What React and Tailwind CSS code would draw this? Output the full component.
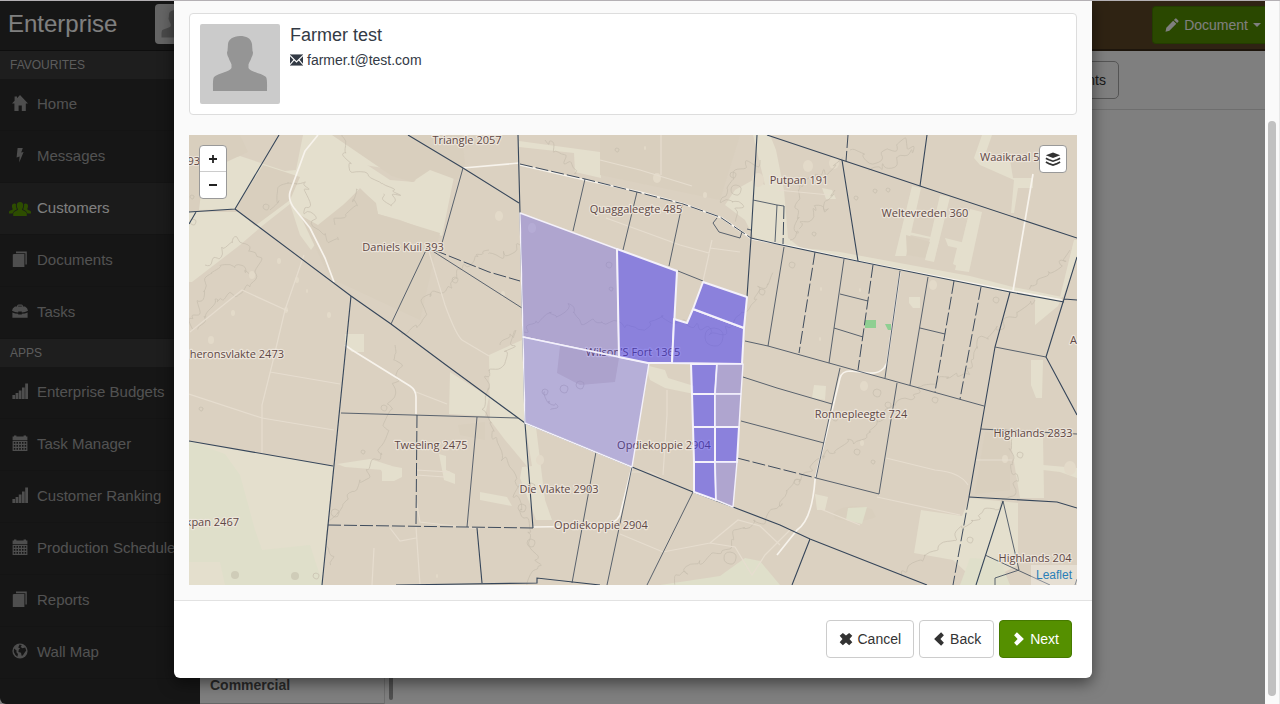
import React from "react";

/* ---------- icons ---------- */

const ICONS = {
  home: "M8 0 L16 8.5 H13.8 V16 H9.8 V10.5 H6.6 V16 H2.4 V8.5 H0 L2.6 5.7 V1.6 H5 V3.2 Z",
  flash: "M5.6 1 L10.8 1 L9.2 5.6 L11.6 5 L7.2 15.6 L7.6 9.4 L4.6 10.4 Z",
  copy: "M4 0.4 H14.8 V13.4 H13.4 V2.2 H4 Z M0.8 3.6 L2 3 H12.4 V16 H0.8 Z",
  signal:
    "M0.4 12 H3.1 V16 H0.4 Z M3.6 10 H6.3 V16 H3.6 Z M6.8 7.4 H9.5 V16 H6.8 Z M10 4.4 H12.7 V16 H10 Z M13.2 0.4 H16 V16 H13.2 Z",
  pencil: "M11.6 0.8 Q12.4 0 13.2 0.8 L15.2 2.8 Q16 3.6 15.2 4.4 L13.8 5.8 L10.2 2.2 Z M9.3 3.1 L12.9 6.7 L5 14.6 L0.6 15.6 L1.5 11 Z",
  remove: "M4.4 1 L8 4 L11.6 1 L15.2 4.4 L12 8 L15.2 11.6 L11.6 15 L8 12 L4.4 15 L0.8 11.6 L4 8 L0.8 4.4 Z",
  left: "M10.4 0.4 L13.6 3.8 L9.6 8 L13.6 12.2 L10.4 15.6 L2.4 8 Z",
  right: "M5.6 0.4 L2.4 3.8 L6.4 8 L2.4 12.2 L5.6 15.6 L13.6 8 Z",
};

function Icon({ name, className }) {
  if (name === "users")
    return (
      <svg viewBox="0 0 22 16" className={className} fill="currentColor" aria-hidden="true">
        <path d="M11 1 C13.2 1 14.4 2.4 14.2 5 C14.1 6.8 13.3 7.6 13 8.6 C13 9.6 17.4 10.2 17.8 12.6 V15 H4.2 V12.6 C4.6 10.2 9 9.6 9 8.6 C8.7 7.6 7.9 6.8 7.8 5 C7.6 2.4 8.8 1 11 1 Z" />
        <path d="M5.4 2.6 C6.2 2.6 6.7 2.9 7 3.3 C6.6 5.4 7.2 7 8 8.2 C7.4 9 4.4 9.6 3.5 12.6 H0 V10.8 C0.6 9.2 3.8 9 3.8 8 C2.6 6.4 2.4 2.6 5.4 2.6 Z" />
        <path d="M16.6 2.6 C15.8 2.6 15.3 2.9 15 3.3 C15.4 5.4 14.8 7 14 8.2 C14.6 9 17.6 9.6 18.5 12.6 H22 V10.8 C21.4 9.2 18.2 9 18.2 8 C19.4 6.4 19.6 2.6 16.6 2.6 Z" />
      </svg>
    );
  if (name === "briefcase")
    return (
      <svg viewBox="0 0 16 16" className={className} fill="currentColor" aria-hidden="true">
        <path fillRule="evenodd" d="M5 3.4 Q5 1.6 6.6 1.6 H9.4 Q11 1.6 11 3.4 H13 Q15.6 4.6 16 7.8 Q13 9.4 9.8 9.6 V8.6 H6.2 V9.6 Q3 9.4 0 7.8 Q0.4 4.6 3 3.4 Z M6.2 3.4 H9.8 V2.7 H6.2 Z" />
        <path d="M0.4 9.4 Q3 10.6 6.2 10.8 V11.6 H9.8 V10.8 Q13 10.6 15.6 9.4 V14.8 H0.4 Z" />
      </svg>
    );
  if (name === "calendar")
    return (
      <svg viewBox="0 0 16 16" className={className} aria-hidden="true">
        <path fill="currentColor" d="M2 1.4 V0.4 H4.4 V1.4 H11.6 V0.4 H14 V1.4 H15.4 V5 H0.6 V1.4 Z" />
        <path fill="none" stroke="currentColor" strokeWidth="1.2" d="M1.2 6.4 H14.8 V15.4 H1.2 Z M1.2 9.4 H14.8 M1.2 12.4 H14.8 M3.9 6.4 V15.4 M6.6 6.4 V15.4 M9.4 6.4 V15.4 M12.1 6.4 V15.4" />
      </svg>
    );
  if (name === "globe")
    return (
      <svg viewBox="0 0 16 16" className={className} aria-hidden="true">
        <circle cx="8" cy="8" r="7.6" fill="currentColor" />
        <path fill="#2d2d2d" d="M7.6 1.6 L9.8 2.2 L8.6 4 L10.6 5.2 L13.2 4.6 L14.2 7.6 L12.6 9.8 L10.8 12.6 L9.6 12.8 L9 9.8 L6.4 9 L6.8 6.4 L8.2 5.6 L6.2 4.6 Z M2 5.4 L4.6 7.6 L4.4 9.2 L6 11 L5.4 13.8 L3.4 12 L1.8 9 Z" />
      </svg>
    );
  if (name === "envelope")
    return (
      <svg viewBox="0 0 14 12" className={className} aria-hidden="true">
        <rect width="14" height="12" fill="currentColor" />
        <path d="M0 1 L7 8 L14 1 M0 11 L4.6 5.6 M14 11 L9.4 5.6" fill="none" stroke="#fff" strokeWidth="1.2" />
      </svg>
    );
  if (name === "layers")
    return (
      <svg viewBox="0 0 16 16" className={className} aria-hidden="true">
        <path d="M8 1.4 L15.2 4.2 L8 7 L0.8 4.2 Z" fill="#333" />
        <path d="M0.9 7.2 Q3 8.4 4 8.8 L8 10.2 L12 8.8 Q13 8.4 15.1 7.2 M0.9 11 Q3 12.2 4 12.6 L8 14 L12 12.6 Q13 12.2 15.1 11" fill="none" stroke="#333" strokeWidth="1.7" />
      </svg>
    );
  return (
    <svg viewBox="0 0 16 16" className={className} fill="currentColor" aria-hidden="true">
      <path d={ICONS[name]} />
    </svg>
  );
}

function Avatar({ className, label }) {
  return (
    <svg viewBox="0 0 80 80" className={className} role="img" aria-label={label}>
      <rect width="80" height="80" rx="2" fill="#cbcbcb" />
      <path
        fill="#959595"
        d="M40 12 C46 12 51 14 52 20 L52.5 27 C53.4 28 53 31 51.5 33.5 C50.5 37 49 38.5 48.5 40.5 V44 C50 48 62 49 66 53 C67.4 55 67 62 67 67 H13 C13 62 12.6 55 14 53 C18 49 30 48 31.5 44 V40.5 C31 38.5 29.5 37 28.5 33.5 C27 31 26.6 28 27.5 27 L28 20 C28.6 15 33 12.6 40 12 Z"
      />
    </svg>
  );
}

/* ---------- map data ---------- */

const PALE = [
  "M189 135 L205 135 L222 160 L240 156 L285 171 L296 170 L303 135 L320 135 L352 155 L390 180 L414 182 L432 162 L445 158 L456 167 L442 236 L400 220 L378 214 L375 203 L360 188 L345 204 L335 222 L318 240 L311 250 L300 235 L290 204 L262 226 L240 245 L192 282 L189 282 Z",
  "M315 135 L345 135 L395 160 L440 178 L420 182 L395 170 L335 160 Z",
  "M189 441 L333 466 L322 585 L189 585 Z",
  "M450 372 L489 397 L485 416 L449 414 Z",
  "M489 355 L522 340 L525 423 L530 470 L505 440 L490 420 Z",
  "M523 337 L649 363 L632 467 L525 423 Z",
  "M525 423 L536 427 L545 500 L552 520 L536 520 L520 478 L522 467 L532 466 Z",
  "M519 141 L600 152 L601 178 L575 172 L574 153 L519 147 Z",
  "M735 190 L753 180 L765 185 L753 135 L770 135 L776 150 L784 190 L788 238 L802 249 L755 240 L745 220 L725 205 Z",
  "M912 186 L921 188 L906 256 L895 256 Z",
  "M940 195 L950 197 L934 262 L925 260 Z",
  "M970 209 L982 212 L969 272 L955 270 Z",
  "M905 231 L935 238 L936 240 L905 234 Z",
  "M945 238 L965 243 L957 266 L953 264 L957 248 L948 246 Z",
  "M783 246 L840 252 L970 276 L1013 287 L1062 297 L1058 306 L1035 325 L1035 298 L860 262 Z",
  "M982 135 L992 135 L985 155 L1010 160 L1013 178 L1033 178 L1033 188 L1018 188 L1014 213 L1011 213 L1014 180 L980 165 L974 158 Z",
  "M909 297 L920 297 L920 308 L913 308 L909 303 Z",
  "M1074 240 L1077 240 L1077 258 L1063 297 L1060 297 Z",
  "M921 510 L962 516 L970 498 L1018 503 L1018 565 L980 585 L953 560 L914 553 Z",
  "M1010 438 L1043 435 L1044 498 L1020 498 Z",
  "M1031 360 L1043 360 L1042 398 L1036 398 L1031 385 Z",
  "M380 468 L386 465 L402 468 L402 477 L394 481 L382 481 L382 472 Z",
  "M439 454 L446 456 L446 470 L455 474 L455 484 L444 480 Z",
  "M337 464 L370 459 L392 466 L383 470 L345 467 Z",
  "M645 365 L665 370 L668 378 L694 386 L694 394 L665 388 L650 380 Z",
  "M345 334 L364 334 L364 352 L352 352 L345 345 Z",
  "M814 385 L826 386 L825 400 L812 398 Z",
  "M815 494 L828 497 L825 510 L817 510 Z",
  "M1043 465 L1077 468 L1077 478 L1060 472 L1043 470 Z",
  "M480 492 L507 497 L512 506 L480 500 Z",
  "M822 188 L832 190 L836 199 L826 199 Z",
];
const GREENISH = [
  "M189 441 L225 454 L240 475 L255 530 L262 550 L310 545 L323 585 L225 585 L220 562 L189 562 Z",
  "M720 576 L745 558 L760 561 L780 585 L660 585 Z",
  "M970 558 L1000 560 L1010 585 L960 585 Z",
  "M848 508 L867 507 L862 524 L846 520 Z",
];
const SHADE = [
  "M189 135 L240 135 L248 152 L220 165 L205 160 L199 210 L235 209 L263 165 L285 172 L300 177 L290 200 L255 226 L240 212 L189 212 Z",
  "M332 135 L462 135 L465 164 L457 180 L430 170 L412 182 L392 176 Z",
  "M318 225 L343 205 L360 189 L376 203 L378 214 L440 233 L420 320 L330 278 L300 215 Z",
  "M600 135 L740 135 L720 200 L600 175 Z",
  "M833 513 Q848 502 872 509 L876 517 Q860 524 835 519 Z",
  "M906 235 L930 242 L925 258 L907 255 Z",
  "M1010 435 L1010 490 L975 494 L985 432 Z",
  "M458 425 L485 422 L485 440 L460 435 Z",
];

const WHITE_ROADS = [
  "M318 135 L305 151 L290 192 Q288 200 294 208 L310 228 L325 258 L334 282",
  "M463 168 L519 163",
  "M520 165 L585 180 L640 192 L684 204 L722 218 L752 239 L800 248 L858 261 L1012 291 L1062 300",
  "M345 345 L352 350 L410 386 Q416 390 416 397 L416 414",
  "M1033 174 L1013 291",
  "M900 272 L887 363 L884 368 Q878 374 870 373 L850 371 Q842 371 840 378 L815 480 Q812 520 797 530 L777 555",
  "M632 467 L620 515 Q616 524 600 526 L533 527",
];
const FAINT_ROADS = [
  "M632 472 L650 472 L668 482",
  "M416 500 L420 522 L480 529",
  "M304 255 L285 310 L272 365 L262 405 L262 455",
  "M190 332 L242 290 L288 311",
  "M189 394 L262 418 L334 430",
  "M270 372 L340 384",
  "M427 245 L445 305 Q456 335 462 340 L489 356",
  "M600 160 L640 170 L692 186 M661 135 L661 175",
  "M606 218 L680 245 L709 253 L712 240 M709 254 L703 281 M710 248 L740 252",
  "M667 390 L667 415 L663 475",
  "M620 534 L663 552 L710 543 L735 547 L752 575 L765 555 L790 530 M710 543 L738 520 L760 526 L780 545",
  "M416 470 L450 472 M416 475 L445 477",
  "M886 458 L935 470 Q960 472 968 485 M976 460 L1012 460",
  "M877 497 L960 515 M818 508 L860 525",
  "M390 528 L400 541 L416 538 M416 527 L420 585",
  "M416 392 L447 404 M374 548 L372 585",
  "M777 190 L830 195",
];

const BOUNDARIES = [
  "M279 135 L235 209 L189 212 M196 212 L189 224",
  "M235 209 L351 296 L391 324 L446 365 L525 423",
  "M351 296 L322 585",
  "M408 135 L463 168 L519 203",
  "M518 135 L520 213 L525 423 L533 528",
  "M757 135 L751 238 L747 297",
  "M767 135 L842 160 L920 186 L1077 238",
  "M751 238 L777 244 L857 261 L1010 292 L1064 302",
  "M842 160 L858 261 M927 135 L920 186",
  "M1077 257 L1064 299 L1046 357 L1077 415 M1064 299 L1077 300",
  "M189 441 L333 466",
  "M525 423 L632 467 L693 492 L733 507 L780 525 L810 539 L927 585",
  "M1010 292 L995 347 L969 497",
  "M969 497 L1057 502 L1077 508",
  "M810 539 L792 585 M1003 501 L976 585",
  "M477 528 L482 583",
  "M396 585 L537 583 L537 578 L600 585",
];
const THIN = [
  "M463 168 L442 243 M428 246 L391 324 M431 250 L522 308",
  "M585 179 L573 231 M637 192 L623 250 M682 205 L669 266 M678 271 L703 281",
  "M717 218 L713 223 L719 232 L740 238 L742 232 M747 229 L751 230",
  "M753 200 L777 205 L784 206 M777 205 L775 242",
  "M745 341 L768 346 L829 363 L984 406",
  "M784 247 L768 346 M844 259 L829 363 M900 271 L885 378 M928 277 L910 385",
  "M840 294 L868 301 M834 328 L863 337 M920 328 L945 334 M995 347 L1046 357",
  "M341 413 L518 418 M477 417 L467 527",
  "M596 452 L572 583 M632 467 L607 585 M693 492 L647 585",
  "M743 377 L777 388 L832 404 M741 421 L824 443 M816 478 L879 494",
  "M840 368 L816 478 M897 383 L879 494",
  "M981 429 L1077 434",
  "M1003 501 L1019 570 M985 555 L1050 585 M1019 570 L995 578 L995 585 M1077 579 L1075 585",
];
const DASHED = [
  "M434 250 L489 272 L520 281",
  "M520 164 L585 179 L637 192 L683 204 L720 217 L751 238",
  "M848 135 L846 161 M784 206 L783 244",
  "M815 252 L799 353 M873 265 L858 370 M954 281 L935 392 M981 287 L960 399",
  "M969 497 L953 585",
  "M417 415 L416 525 M328 525 L533 528",
  "M737 458 L816 478",
];

const CONTOURS = [
  [[205, 265], [222, 250], [240, 240], [262, 262], [245, 290], [215, 300], [200, 330]],
  [[193, 330], [200, 295], [215, 270], [238, 268], [252, 275]],
  [[270, 210], [285, 185], [305, 180], [308, 200], [304, 212], [315, 225], [325, 240], [340, 235]],
  [[335, 225], [352, 210], [362, 188]],
  [[342, 135], [346, 160], [360, 175], [385, 180], [398, 192], [392, 205], [378, 195]],
  [[489, 250], [460, 268], [450, 285], [425, 300], [422, 320], [400, 340]],
  [[395, 345], [400, 370], [390, 400], [385, 440], [370, 470], [345, 500], [328, 530], [333, 565]],
  [[489, 370], [483, 395], [488, 420], [500, 450], [515, 480], [522, 510], [530, 540], [540, 565], [528, 585]],
  [[545, 140], [555, 150], [570, 160], [580, 175]],
  [[524, 332], [540, 316], [562, 312], [568, 306], [580, 322], [610, 322], [640, 328], [660, 320], [690, 322], [720, 335], [742, 315], [760, 290], [775, 275]],
  [[760, 160], [745, 165], [730, 180], [722, 200], [740, 205], [735, 225]],
  [[790, 240], [800, 215], [795, 195], [812, 175], [830, 170], [842, 160]],
  [[850, 150], [870, 160], [890, 150], [905, 140], [915, 150], [890, 165], [870, 172]],
  [[835, 190], [825, 215], [815, 205], [800, 232]],
  [[1070, 250], [1060, 270], [1040, 275], [1030, 290]],
  [[1035, 300], [1010, 320], [990, 330], [975, 350], [965, 375], [930, 380], [905, 400], [880, 420], [860, 440], [830, 450], [810, 470], [790, 490], [777, 510]],
  [[1008, 435], [1012, 460], [1020, 480], [1010, 500], [980, 515], [950, 540], [920, 560], [900, 580]],
  [[780, 505], [760, 520], [735, 535], [720, 555], [690, 565], [670, 585]],
  [[520, 245], [500, 255], [489, 250]],
  [[500, 345], [520, 330], [505, 360], [489, 370]],
  [[545, 392], [548, 404], [560, 402], [551, 412]],
];
const BLOBS = [
  [266, 207, 3], [192, 197, 2], [193, 222, 3], [609, 265, 3], [611, 289, 2], [564, 389, 4], [580, 385, 4], [545, 392, 3],
  [455, 280, 3], [531, 487, 4], [522, 508, 4], [531, 543, 4], [857, 452, 3], [873, 462, 2], [835, 418, 3], [877, 393, 4],
  [814, 234, 2], [875, 191, 2], [888, 190, 2], [856, 198, 2], [714, 337, 9], [762, 292, 3], [733, 175, 3], [736, 190, 5],
  [201, 409, 2], [384, 408, 3], [363, 452, 2], [335, 513, 4], [316, 576, 3], [792, 265, 3], [730, 558, 6], [617, 150, 2],
  [996, 300, 3], [935, 400, 3], [888, 405, 3], [797, 482, 3], [970, 540, 3], [1020, 455, 3],
];
const SPOTS = [
  [279, 261, 2], [252, 275, 3], [297, 280, 2], [307, 291, 1], [329, 315, 2], [233, 313, 2], [286, 310, 2], [211, 340, 3],
  [499, 216, 4], [657, 178, 4], [645, 148, 1], [705, 195, 2], [758, 180, 6], [808, 166, 5], [834, 163, 5],
  [821, 289, 1], [860, 290, 1], [820, 339, 1], [933, 285, 4], [1005, 459, 3], [1070, 468, 6], [864, 386, 4],
  [437, 576, 1], [540, 460, 4], [862, 443, 2], [503, 294, 2], [532, 228, 4],
];

// Turns a coarse polyline into a smooth, irregular contour line, always the same for the same input.
function wiggle(points) {
  let seed = points[0][0] * 31 + points[0][1];
  const rnd = () => {
    seed = (seed * 1103515245 + 12345) % 2147483648;
    return seed / 2147483648 - 0.5;
  };
  const out = [points[0]];
  for (let i = 1; i < points.length; i++) {
    const [x0, y0] = points[i - 1];
    const [x1, y1] = points[i];
    const n = Math.max(2, Math.round(Math.hypot(x1 - x0, y1 - y0) / 4));
    for (let k = 1; k <= n; k++) {
      const t = k / n;
      out.push([x0 + (x1 - x0) * t + rnd() * 11, y0 + (y1 - y0) * t + rnd() * 11]);
    }
  }
  let d = `M${out[0][0]} ${out[0][1]}`;
  for (let i = 1; i < out.length - 1; i++) {
    const mx = (out[i][0] + out[i + 1][0]) / 2;
    const my = (out[i][1] + out[i + 1][1]) / 2;
    d += ` Q${out[i][0].toFixed(1)} ${out[i][1].toFixed(1)} ${mx.toFixed(1)} ${my.toFixed(1)}`;
  }
  return d;
}

function blob([x, y, r]) {
  return `M${x - r} ${y} Q${x - r} ${y - r} ${x} ${y - r} Q${x + r + 1} ${y - r + 1} ${x + r} ${y} Q${x + r - 1} ${y + r + 1} ${x} ${y + r} Q${x - r} ${y + r - 1} ${x - r} ${y} Z`;
}

const PARCELS = [
  { d: "M520 213 L617 249 L619 357 L523 337 Z" },
  { d: "M523 337 L619 357 L649 363 L632 467 L525 423 Z" },
  { d: "M617 249 L677 271 L672 363 L648 363 L619 357 Z", on: true },
  { d: "M674 319 L687 323 L693 309 L744 328 L742 364 L672 363 Z", on: true },
  { d: "M703 282 L747 297 L744 328 L693 309 Z", on: true },
  { d: "M691 364 L717 364 L715 394 L692 394 Z", on: true },
  { d: "M717 364 L743 364 L741 394 L715 394 Z" },
  { d: "M692 394 L715 394 L715 427 L693 427 Z", on: true },
  { d: "M715 394 L741 394 L739 427 L715 427 Z" },
  { d: "M693 427 L715 427 L715 462 L694 462 Z", on: true },
  { d: "M715 427 L739 427 L737 462 L715 462 Z", on: true },
  { d: "M694 462 L715 462 L716 500 L694 492 Z", on: true },
  { d: "M715 462 L737 462 L733 507 L716 500 Z" },
];

const LABELS = [
  ["Triangle 2057", 467, 144, "middle"],
  ["Quaggaleegte 485", 636, 213, "middle"],
  ["Putpan 191", 799, 184, "middle"],
  ["Waaikraal 5", 980, 161, "start"],
  ["Weltevreden 360", 925, 217, "middle"],
  ["Daniels Kuil 393", 403, 251, "middle"],
  ["heronsvlakte 2473", 284, 358, "end"],
  ["93", 200, 165, "end"],
  ["Tweeling 2475", 431, 449, "middle"],
  ["Wilson'S Fort 1365", 633, 356, "middle"],
  ["Opdiekoppie 2904", 664, 449, "middle"],
  ["Die Vlakte 2903", 559, 493, "middle"],
  ["Opdiekoppie 2904", 601, 529, "middle"],
  ["kpan 2467", 239, 526, "end"],
  ["Ronnepleegte 724", 861, 418, "middle"],
  ["Highlands 2833", 1033, 437, "middle"],
  ["Highlands 204", 1035, 562, "middle"],
  ["A", 1070, 344, "start"],
];

function Lines({ paths, ...rest }) {
  return (
    <g fill="none" {...rest}>
      {paths.map((d, i) => (
        <path key={i} d={d} />
      ))}
    </g>
  );
}

function FarmMap() {
  return (
    <svg viewBox="189 135 888 450" preserveAspectRatio="xMidYMid slice" className="block h-full w-full" role="img" aria-label="Farm map">
      <rect x="189" y="135" width="888" height="450" fill="#dbd1c1" />
      <g fill="#e4dfcd">{PALE.map((d, i) => <path key={i} d={d} />)}</g>
      <g fill="#d9cfbe">{SHADE.map((d, i) => <path key={i} d={d} />)}</g>
      <g fill="#dfdfca">{GREENISH.map((d, i) => <path key={i} d={d} />)}</g>
      <g fill="#e3dac9">{SPOTS.map(([x, y, r], i) => <ellipse key={i} cx={x} cy={y} rx={r} ry={r + 1} />)}</g>
      <circle cx="235" cy="575" r="4" fill="#cfccb8" />
      <circle cx="295" cy="576" r="4" fill="#cfccb8" />
      <path d="M557 373 L580 385 L615 382 L619 358 L560 346 Z" fill="#d6ccbc" />
      <path d="M865 320 H876 V328 H865 Z M885 324 H891 V330 H888 Z" fill="#8fcf92" />
      <Lines paths={CONTOURS.map(wiggle)} stroke="#c6bdae" strokeWidth="0.7" />
      <Lines paths={BLOBS.map(blob)} stroke="#c6bdae" strokeWidth="0.7" />
      <Lines paths={FAINT_ROADS} stroke="#e6ddcf" strokeWidth="1.2" />
      <Lines paths={WHITE_ROADS} stroke="#f7f3ec" strokeWidth="1.7" strokeLinejoin="round" />
      <Lines paths={BOUNDARIES} stroke="#36465a" strokeWidth="1.1" />
      <Lines paths={THIN} stroke="#4a5563" strokeWidth="0.9" />
      <Lines paths={DASHED} stroke="#3f4c5d" strokeWidth="1" strokeDasharray="13 3" />
      <g fontFamily="'Open Sans', 'Noto Sans', sans-serif" fontSize="11" fill="#5f4845" stroke="#efe8df" strokeOpacity="0.85" strokeWidth="2.4" strokeLinejoin="round" paintOrder="stroke">
        {LABELS.map(([text, x, y, anchor], i) => (
          <text key={i} x={x} y={y} textAnchor={anchor}>
            {text}
          </text>
        ))}
      </g>
      <g fill="#3c31f8" stroke="#f4f1fa" strokeLinejoin="round">
        {PARCELS.map((p) => (
          <path key={p.d} d={p.d} fillOpacity={p.on ? 0.5 : 0.27} strokeWidth={p.on ? 2 : 1.4} />
        ))}
      </g>
    </svg>
  );
}

/* ---------- page behind the dialog ---------- */

function NavGroup({ title, items }) {
  return (
    <section>
      <h2 className="flex h-7 items-center bg-[#3c3c3c] px-[10px] text-[12px] text-[#b8b8b8]">{title}</h2>
      <ul>
        {items.map(([label, icon, active]) => (
          <li key={label}>
            <a
              href="#"
              className={
                active
                  ? "flex h-[52px] items-center gap-1 border-b border-[#292929] bg-[#363636] pl-[9px] text-[15px] whitespace-nowrap text-white"
                  : "flex h-[52px] items-center gap-1 border-b border-[#292929] pl-[9px] text-[15px] whitespace-nowrap text-[#a4a4a4]"
              }
            >
              <span className={active ? "flex w-6 shrink-0 justify-center pr-[2px] text-[#5a9a00]" : "flex w-6 shrink-0 justify-center pr-[2px] pb-1 text-[#9c9c9c]"}>
                <Icon name={icon} className={active ? "h-4 w-[22px]" : "h-4 w-4"} />
              </span>
              {label}
            </a>
          </li>
        ))}
      </ul>
    </section>
  );
}

function Sidebar() {
  return (
    <nav className="w-[200px] shrink-0 overflow-hidden rounded-bl-md bg-[#2d2d2d]">
      <div className="flex h-[50px] items-center justify-between border-b border-[#1c1c1c] pr-[5px] pb-1 pl-2">
        <span className="text-[24px] text-white">Enterprise</span>
        <Avatar className="h-10 w-10 rounded" label="Account" />
      </div>
      <NavGroup
        title="FAVOURITES"
        items={[
          ["Home", "home"],
          ["Messages", "flash"],
          ["Customers", "users", true],
          ["Documents", "copy"],
          ["Tasks", "briefcase"],
        ]}
      />
      <NavGroup
        title="APPS"
        items={[
          ["Enterprise Budgets", "signal"],
          ["Task Manager", "calendar"],
          ["Customer Ranking", "signal"],
          ["Production Schedule", "calendar"],
          ["Reports", "copy"],
          ["Wall Map", "globe"],
        ]}
      />
    </nav>
  );
}

function Workspace() {
  return (
    <main className="flex min-w-0 flex-1 flex-col">
      <header className="flex h-[50px] justify-end border-b-2 border-[#3a2b18] bg-[#5e4626] pt-[5px]">
        <button type="button" className="flex h-[38px] items-center gap-[5px] rounded-l border border-r-0 border-[#467a00] bg-[#559000] pr-1 pl-3 text-[14px] whitespace-nowrap text-white">
          <Icon name="pencil" className="h-[14px] w-[14px]" />
          Document
          <span className="border-x-4 border-t-4 border-x-transparent border-t-white" />
        </button>
      </header>
      <div className="flex h-[59px] items-center justify-end border-b border-[#dcdcdc] pr-[146px]">
        <button type="button" className="h-[38px] rounded-[5px] border border-[#a8a8a8] px-3 text-[14px] text-[#333]">
          Documents
        </button>
      </div>
      <div className="flex flex-1">
        <ul className="flex w-[185px] flex-col justify-end border-r border-[#ddd]">
          <li className="border-b border-[#ccc] px-[10px] py-2 text-[14px] leading-5 font-bold text-[#555]">Commercial</li>
        </ul>
        <div className="ml-1 flex w-1 flex-col pb-1">
          <span className="flex-1 rounded-b bg-[#a0a0a0]" />
        </div>
      </div>
    </main>
  );
}

/* ---------- dialog ---------- */

function Dialog() {
  return (
    <div role="dialog" aria-modal="true" aria-label="Farmer test" className="mx-auto max-w-[918px] rounded-b-md bg-white shadow-[0_5px_15px_rgba(0,0,0,0.5)]">
      <div className="flex flex-col gap-5 border-b border-[#e2e2e2] bg-[#fafafa] px-[15px] pt-3 pb-[15px]">
        <section className="flex gap-[10px] rounded border border-[#ddd] bg-white p-[10px]">
          <Avatar className="h-20 w-20" label="Farmer test" />
          <div className="text-[#333a45]">
            <h1 className="text-[18px] leading-[22px] font-medium">Farmer test</h1>
            <p className="mt-1 flex items-center gap-1 text-[14px] leading-5">
              <Icon name="envelope" className="h-3 w-[13px]" />
              farmer.t@test.com
            </p>
          </div>
        </section>
        <section className="relative h-[450px] overflow-hidden">
          <FarmMap />
          <div className="absolute top-[10px] left-[10px] flex w-7 flex-col overflow-hidden rounded border border-[#999] bg-white">
            <button type="button" aria-label="Zoom in" className="flex h-[26px] items-center justify-center border-b border-[#ccc]">
              <svg viewBox="0 0 8 8" className="h-2 w-2" aria-hidden="true">
                <path d="M4 0 V8 M0 4 H8" stroke="#222" strokeWidth="1.8" />
              </svg>
            </button>
            <button type="button" aria-label="Zoom out" className="flex h-[26px] items-center justify-center">
              <svg viewBox="0 0 8 8" className="h-2 w-2" aria-hidden="true">
                <path d="M0 4 H8" stroke="#222" strokeWidth="1.8" />
              </svg>
            </button>
          </div>
          <button type="button" aria-label="Layers" className="absolute top-[10px] right-[10px] flex h-7 w-7 items-center justify-center rounded border border-[#999] bg-white">
            <Icon name="layers" className="h-4 w-4" />
          </button>
          <a href="#" className="absolute right-0 bottom-0 bg-white/30 px-[5px] text-[12px] leading-5 text-[#2a7fb8]">
            Leaflet
          </a>
        </section>
      </div>
      <footer className="flex justify-end gap-[5px] px-5 pt-[19px] pb-5">
        <button type="button" className="flex h-[38px] items-center gap-1 rounded border border-[#ccc] bg-white px-3 text-[14px] text-[#333]">
          <Icon name="remove" className="h-[14px] w-[14px]" />
          Cancel
        </button>
        <button type="button" className="flex h-[38px] items-center gap-1 rounded border border-[#ccc] bg-white px-3 text-[14px] text-[#333]">
          <Icon name="left" className="h-[14px] w-[14px]" />
          Back
        </button>
        <button type="button" className="flex h-[38px] items-center gap-1 rounded border border-[#467a00] bg-[#559000] px-3 text-[14px] text-white">
          <Icon name="right" className="h-[14px] w-[14px]" />
          Next
        </button>
      </footer>
    </div>
  );
}

export default function App() {
  return (
    <div className="flex h-screen overflow-hidden border-t border-[#b4b0b4] bg-white font-['Liberation_Sans',Arial,sans-serif]">
      <div className="relative flex min-w-0 flex-1">
        <Sidebar />
        <Workspace />
        <div className="absolute inset-0 overflow-hidden bg-black/50 pl-px">
          <Dialog />
        </div>
      </div>
      <div className="flex w-[15px] shrink-0 flex-col items-center border-r border-[#e8e8e8] bg-[#fafafa] pt-[120px] pb-2">
        <span className="w-2 flex-1 rounded-full bg-[#c1c1c1]" />
      </div>
    </div>
  );
}
